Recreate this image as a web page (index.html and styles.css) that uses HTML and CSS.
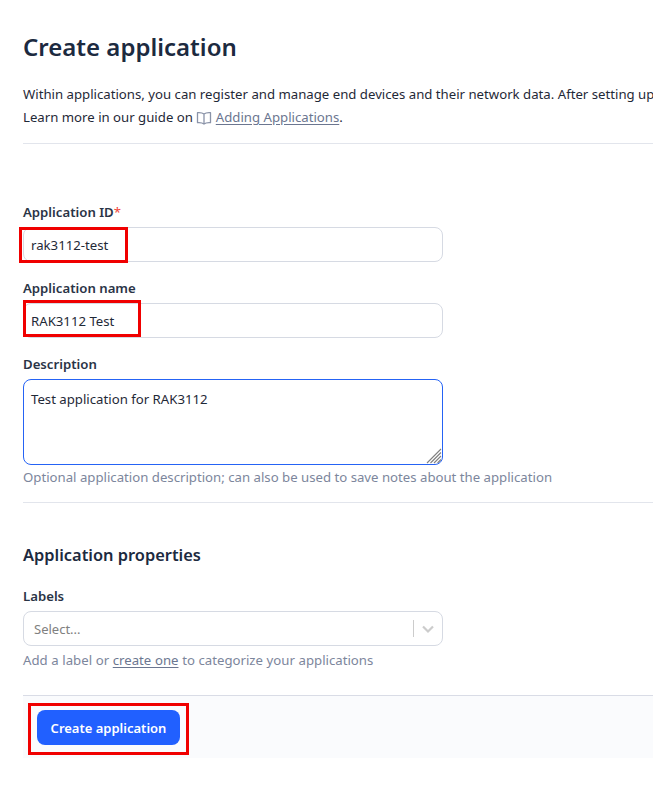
FILE: index.html
```html
<!DOCTYPE html>
<html lang="en">
<head>
<meta charset="utf-8">
<title>Create application</title>
<link rel="stylesheet" href="styles.css">
</head>
<body>
<main class="page">
  <h1 class="title">Create application</h1>
  <p class="intro">Within applications, you can register and manage end devices and their network data. After setting up<br>Learn more in our guide on <svg class="book" viewBox="0 0 16 14" width="16" height="14"><path d="M8 3C6.6 1.900 4 1.500 1.500 1.700V11.700C4 11.500 6.600 11.900 8 13C9.400 11.900 12 11.500 14.500 11.700V1.700C12 1.500 9.400 1.900 8 3ZM8 3V13" fill="none" stroke="#8a93a8" stroke-width="1.300" stroke-linejoin="round"/></svg> <a class="link" href="#">Adding Applications</a>.</p>
  <hr class="rule rule-top">
  <form class="form">
    <div class="field field-gap">
      <label class="label">Application ID<span class="req">*</span></label>
      <div class="input">rak3112-test<span class="mark mark-id"></span></div>
    </div>
    <div class="field field-gap">
      <label class="label">Application name</label>
      <div class="input">RAK3112 Test<span class="mark mark-name"></span></div>
    </div>
    <div class="field">
      <label class="label">Description</label>
      <div class="textarea">Test application for RAK3112
        <svg class="grip" viewBox="0 0 16 16" width="16" height="16"><path d="M15 1L1 15M15 4.500L4.500 15M15 8L8 15M15 11.500L11.500 15" stroke="#808080" stroke-width="1.100" fill="none"/></svg>
      </div>
      <p class="help">Optional application description; can also be used to save notes about the application</p>
    </div>
    <hr class="rule rule-mid">
    <h2 class="subtitle">Application properties</h2>
    <div class="field field-labels">
      <label class="label">Labels</label>
      <div class="select">
        <span class="placeholder">Select...</span>
        <span class="sep"></span>
        <svg class="chev" viewBox="0 0 14 10" width="14" height="10"><path d="M2 2.500L7 7.500L12 2.500" fill="none" stroke="#cccccc" stroke-width="2.200"/></svg>
      </div>
      <p class="help help-labels">Add a label or <a class="link" href="#">create one</a> to categorize your applications</p>
    </div>
    <div class="actions">
      <button class="btn" type="button">Create application</button>
      <span class="mark mark-btn"></span>
    </div>
  </form>
</main>
</body>
</html>
```
FILE: styles.css
```css
html, body { margin: 0; padding: 0; background: #fff; overflow: hidden; }
body { width: 653px; height: 795px; font-family: "Noto Sans", "Open Sans", sans-serif; color: #1c2536; }
.page { padding: 29px 0 0 23px; width: 630px; }
.title { margin: 0; font-size: 24px; line-height: 35px; font-weight: 600; color: #1c2a40; }
.intro { margin: 19px 0 0; font-size: 13.2px; line-height: 23px; white-space: nowrap; color: #1f2937; }
.book { vertical-align: -3px; }
.link { color: #6b7690; text-decoration: underline; text-underline-offset: 2px; }
.rule { border: 0; border-top: 1px solid #e2e5ec; margin: 0; }
.rule-top { margin-top: 14px; }
.form { padding-top: 59px; }
.field-gap { margin-bottom: 17px; }
.label { display: block; font-size: 13.2px; line-height: 18px; font-weight: 600; color: #2a3446; margin-bottom: 6px; }
.req { color: #f0443a; font-weight: 400; }
.input { position: relative; box-sizing: border-box; width: 420px; height: 35px; border: 1px solid #d6dae3; border-radius: 8px; padding: 1px 7px 0; font-size: 13.2px; line-height: 33px; color: #1f2937; background: #fff; }
.textarea { position: relative; box-sizing: border-box; width: 420px; height: 86px; border: 1px solid #2563f5; border-radius: 8px; padding: 10px 7px 8px; font-size: 13.2px; line-height: 18px; color: #1f2937; }
.grip { position: absolute; right: 0; bottom: 0; }
.help { margin: 2px 0 0; font-size: 13.2px; line-height: 20px; color: #7c869c; }
.help-labels { margin-top: 4px; word-spacing: 0.2px; }
.rule-mid { margin-top: 15px; }
.subtitle { margin: 38px 0 0; font-size: 16.4px; line-height: 28px; font-weight: 600; color: #1c2a40; }
.field-labels { margin-top: 18px; }
.select { display: flex; align-items: center; box-sizing: border-box; width: 420px; height: 35px; border: 1px solid #d6dae3; border-radius: 8px; padding: 0 7px 0 10px; }
.placeholder { flex: 1; font-size: 13px; color: #808080; }
.sep { width: 1px; height: 17px; background: #cccccc; margin-right: 7px; }
.chev { display: block; }
.actions { position: relative; margin-top: 25px; height: 63px; width: 630px; background: #fafbfd; border-top: 1px solid #d9dce6; box-sizing: border-box; padding: 14px 0 0 14px; }
.btn { display: block; width: 143px; height: 35px; border: 0; border-radius: 8px; background: #2160ff; color: #fff; font-family: inherit; font-size: 13px; font-weight: 600; padding: 0; }
.mark { position: absolute; box-sizing: border-box; border: 3px solid #f00000; pointer-events: none; }
.mark-id { left: -5px; top: -1px; width: 109px; height: 36px; }
.mark-name { left: -1px; top: -4px; width: 118px; height: 37px; }
.mark-btn { left: 5px; top: 7px; width: 161px; height: 52px; }
```
